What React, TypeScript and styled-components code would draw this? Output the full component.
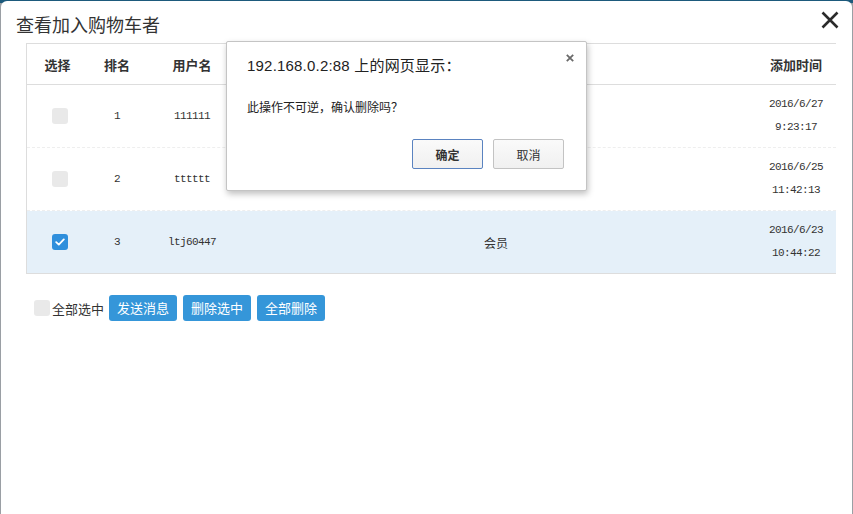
import React from "react";
import styled, { createGlobalStyle } from "styled-components";

const Global = createGlobalStyle`
  html, body { margin: 0; padding: 0; }
  body {
    width: 853px;
    height: 514px;
    overflow: hidden;
    background: linear-gradient(#1d5a7c 0, #1d5a7c 3px, #9a9fa4 3px, #9a9fa4 100%);
    font-family: "Noto Sans CJK SC", "Liberation Sans", sans-serif;
  }
`;

const Modal = styled.div`
  position: relative;
  margin: 1px 1px 0 1px;
  height: 513px;
  background: #fff;
  border-radius: 6px 6px 0 0;
  box-sizing: border-box;
`;

const Header = styled.div`
  display: flex;
  align-items: center;
  justify-content: space-between;
  height: 42px;
  padding: 0 12px 0 15px;
  box-sizing: border-box;
`;

const Title = styled.h4`
  margin: 0;
  font-size: 18px;
  font-weight: 400;
  color: #333;
  line-height: 24px;
  position: relative;
  top: 2px;
`;

const CloseBtn = styled.button`
  border: 0;
  background: none;
  padding: 0;
  width: 20px;
  height: 20px;
  display: flex;
  align-items: center;
  justify-content: center;
  position: relative;
  top: -2px;
  cursor: pointer;
`;

const Table = styled.div`
  margin: 0 16px 0 25px;
  border-left: 1px solid #ddd;
  border-top: 1px solid #ddd;
  border-bottom: 1px solid #ddd;
`;

const cols = "61px 58px 92px 140px 236px 142px 80px";

const HeadRow = styled.div`
  display: grid;
  grid-template-columns: ${cols};
  height: 40px;
  align-items: center;
  border-bottom: 1px solid #ddd;
`;

const HeadCell = styled.div<{ $pad?: number }>`
  text-align: center;
  font-size: 13px;
  font-weight: 700;
  color: #333;
  padding-left: ${(p) => p.$pad ?? 0}px;
`;

const Row = styled.div<{ $selected?: boolean; $last?: boolean }>`
  display: grid;
  grid-template-columns: ${cols};
  height: 62px;
  align-items: center;
  background: ${(p) => (p.$selected ? "#e5f0f9" : "#fff")};
  border-bottom: ${(p) => (p.$last ? "0" : "1px dashed #eee")};
`;

const Cell = styled.div<{ $pad?: number }>`
  text-align: center;
  font-family: "Liberation Mono", "DejaVu Sans Mono", monospace;
  font-size: 11px;
  letter-spacing: -0.6px;
  color: #333;
  line-height: 23px;
  padding-left: ${(p) => p.$pad ?? 0}px;
`;

const TextCell = styled.div`
  text-align: center;
  font-size: 12px;
  color: #333;
`;

const CheckCell = styled.div`
  display: flex;
  justify-content: center;
  padding-left: 4px;
`;

const Box = styled.span<{ $checked?: boolean }>`
  display: inline-flex;
  align-items: center;
  justify-content: center;
  width: 16px;
  height: 16px;
  border-radius: 3px;
  background: ${(p) => (p.$checked ? "#2f8fdc" : "#e9e9e9")};
  flex-shrink: 0;
`;

const Toolbar = styled.div`
  display: flex;
  align-items: center;
  margin: 21px 0 0 33px;
`;

const AllLabel = styled.label`
  display: flex;
  align-items: center;
  font-size: 13px;
  color: #333;
  margin-right: 5px;
  gap: 2px;
`;

const Actions = styled.div`
  display: flex;
  gap: 6px;
`;

const BlueBtn = styled.button`
  height: 26px;
  padding: 0 8px;
  border: 0;
  border-radius: 3px;
  background: #3596d9;
  color: #fff;
  font-family: "Noto Sans CJK SC", sans-serif;
  font-size: 13px;
  line-height: 26px;
`;

const Dialog = styled.div`
  position: absolute;
  left: 225px;
  top: 40px;
  width: 361px;
  height: 150px;
  box-sizing: border-box;
  background: #fff;
  border: 1px solid #c4c4c4;
  border-radius: 2px;
  box-shadow: 1px 3px 6px rgba(0, 0, 0, 0.25);
  padding: 12px 22px 0 20px;
`;

const DialogTitle = styled.div`
  font-family: "Liberation Sans", "Noto Sans CJK SC", sans-serif;
  font-size: 15px;
  color: #222;
  line-height: 24px;
  letter-spacing: 0.2px;
`;

const DialogClose = styled.span`
  position: absolute;
  right: 10px;
  top: 12px;
  width: 10px;
  height: 10px;
  display: flex;
`;

const DialogMsg = styled.div`
  margin-top: 20px;
  font-size: 12px;
  color: #222;
  line-height: 18px;
`;

const DialogBtns = styled.div`
  display: flex;
  justify-content: flex-end;
  gap: 10px;
  margin-top: 23px;
`;

const DlgBtn = styled.button<{ $primary?: boolean }>`
  width: 71px;
  height: 30px;
  border-radius: 2px;
  border: 1px solid ${(p) => (p.$primary ? "#5a83c0" : "#c3c3c3")};
  background: linear-gradient(#fafafa, #f0f0f0);
  font-family: "Noto Sans CJK SC", sans-serif;
  font-size: 12px;
  font-weight: ${(p) => (p.$primary ? 700 : 400)};
  color: #333;
  padding: 0;
`;

type R = { rank: string; user: string; date: string; time: string; checked?: boolean };

const rows: R[] = [
  { rank: "1", user: "111111", date: "2016/6/27", time: "9:23:17" },
  { rank: "2", user: "tttttt", date: "2016/6/25", time: "11:42:13" },
  { rank: "3", user: "ltj60447", date: "2016/6/23", time: "10:44:22", checked: true },
];

const Check = () => (
  <svg width="10" height="8" viewBox="0 0 10 8">
    <path d="M1.2 4.2 L3.8 6.6 L8.8 1.4" fill="none" stroke="#fff" strokeWidth="1.8" strokeLinecap="round" strokeLinejoin="round" />
  </svg>
);

export default function App() {
  return (
    <>
      <Global />
      <Modal>
        <Header>
          <Title>查看加入购物车者</Title>
          <CloseBtn aria-label="关闭">
            <svg width="18" height="18" viewBox="0 0 18 18">
              <path d="M1.5 1.5 L16.5 16.5 M16.5 1.5 L1.5 16.5" stroke="#2b2b2b" strokeWidth="2.6" />
            </svg>
          </CloseBtn>
        </Header>
        <Table>
          <HeadRow>
            <HeadCell $pad={0}>选择</HeadCell>
            <HeadCell $pad={0}>排名</HeadCell>
            <HeadCell $pad={0}>用户名</HeadCell>
            <HeadCell />
            <HeadCell />
            <HeadCell />
            <HeadCell $pad={0}>添加时间</HeadCell>
          </HeadRow>
          {rows.map((r, i) => (
            <Row key={r.rank} $selected={r.checked} $last={i === rows.length - 1}>
              <CheckCell>
                <Box $checked={r.checked}>{r.checked && <Check />}</Box>
              </CheckCell>
              <Cell $pad={0}>{r.rank}</Cell>
              <Cell $pad={0}>{r.user}</Cell>
              <Cell />
              <TextCell>会员</TextCell>
              <Cell />
              <Cell $pad={0}>
                {r.date}
                <br />
                {r.time}
              </Cell>
            </Row>
          ))}
        </Table>
        <Toolbar>
          <AllLabel>
            <Box />
            全部选中
          </AllLabel>
          <Actions>
            <BlueBtn>发送消息</BlueBtn>
            <BlueBtn>删除选中</BlueBtn>
            <BlueBtn>全部删除</BlueBtn>
          </Actions>
        </Toolbar>
        <Dialog>
          <DialogTitle>192.168.0.2:88 上的网页显示：</DialogTitle>
          <DialogClose>
            <svg width="8" height="8" viewBox="0 0 8 8">
              <path d="M0.8 0.8 L7.2 7.2 M7.2 0.8 L0.8 7.2" stroke="#6a6a6a" strokeWidth="1.8" />
            </svg>
          </DialogClose>
          <DialogMsg>此操作不可逆，确认删除吗？</DialogMsg>
          <DialogBtns>
            <DlgBtn $primary>确定</DlgBtn>
            <DlgBtn>取消</DlgBtn>
          </DialogBtns>
        </Dialog>
      </Modal>
    </>
  );
}
